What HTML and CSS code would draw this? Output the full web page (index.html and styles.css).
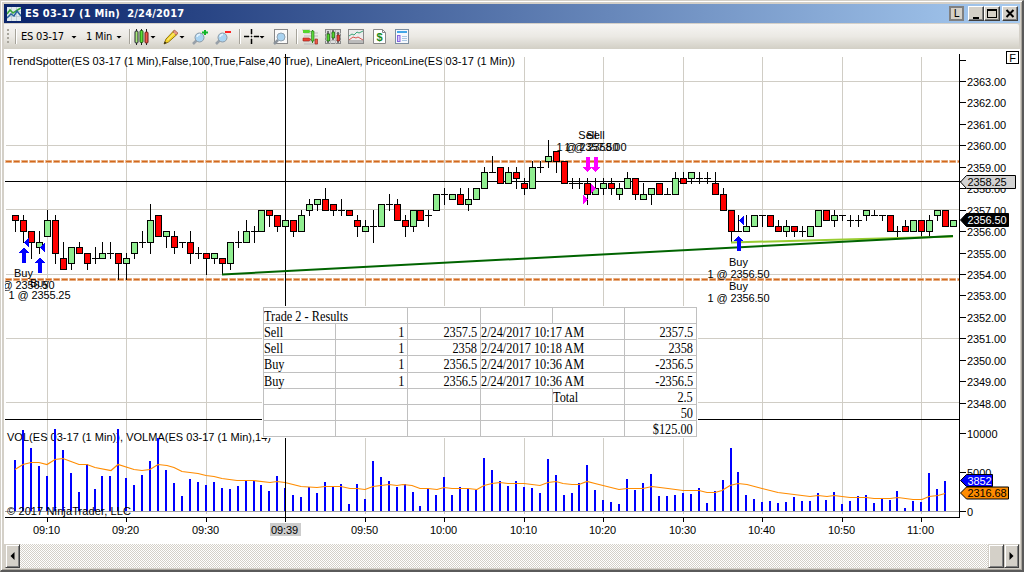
FILE: index.html
```html
<!DOCTYPE html>
<html lang="en">
<head>
<meta charset="utf-8">
<title>ES 03-17 (1 Min) 2/24/2017</title>
<link rel="stylesheet" href="styles.css">
</head>
<body>
<div class="window">
  <header class="titlebar">
    <svg class="app-icon" width="14" height="14" viewBox="0 0 14 14"><rect width="14" height="14" fill="#dfe9ee"/><path d="M0 4.5h14M0 9.5h14M4.5 0v14M9.5 0v14" stroke="#b4c4ce" stroke-width=".7"/><path d="M0 7l3-4 3 3 3-2 5-3" fill="none" stroke="#38a838" stroke-width="1.5"/><path d="M0 11l4-4 3 2 3-5 4 5" fill="none" stroke="#26649c" stroke-width="1.5"/></svg>
    <span class="title">ES 03-17 (1 Min)&nbsp; 2/24/2017</span>
    <span class="link-btn">L</span>
    <span class="win-btn"><svg width="13" height="12"><path d="M3 9h6v2H3z"/></svg></span>
    <span class="win-btn"><svg width="13" height="12"><path d="M1 1h10v9H1zM2 3v6h8V3z" fill-rule="evenodd"/></svg></span>
    <span class="win-btn close"><svg width="13" height="12"><path d="M2.500 2l7 7m0-7l-7 7" stroke="#000" stroke-width="2"/></svg></span>
  </header>

  <nav class="toolbar">
    <span class="grip"></span><span class="sep"></span>
    <span class="label instrument">ES 03-17</span><span class="caret"></span>
    <span class="label period">1 Min</span><span class="caret"></span>
    <span class="sep after-period"></span>
    <svg class="icon candles" width="16" height="16" viewBox="0 0 16 16"><path d="M2.5 0v16M7.5 0v16M12.5 0v16" stroke="#222"/><rect x="1" y="2" width="3" height="12" rx="1" fill="#a8e878" stroke="#223"/><rect x="6" y="1.5" width="3" height="12" rx="1" fill="#5be033" stroke="#1a5a10"/><rect x="11" y="3" width="3" height="11" rx="1" fill="#f25a4c" stroke="#6a1b14"/></svg>
    <span class="caret"></span>
    <svg class="icon pencil" width="16" height="16" viewBox="0 0 16 16"><path d="M1 15l2-5 8-8.5 3.5 3.5-9 8z" fill="#f5d52c" stroke="#94750c"/><path d="M10 3l1.5-2 3.5 3-2 2z" fill="#e99580" stroke="#a45e50" stroke-width=".7"/><path d="M1 15l.7-2.5 2 1.6z" fill="#222"/><path d="M4.5 11l7-7" stroke="#fff5a0"/></svg>
    <span class="caret"></span>
    <svg class="icon zoom-in" width="16" height="16" viewBox="0 0 16 16"><path d="M1 15l4-4" stroke="#98a0a8" stroke-width="2.5"/><circle cx="7.5" cy="8.5" r="4.5" fill="#a9d3f1" stroke="#8b99a5"/><path d="M5 8a3 3 0 013-2.5" stroke="#e6f5ff" fill="none" stroke-width="1.3"/><path d="M10 3.5h6M13 1v5" stroke="#12b52a" stroke-width="2"/></svg>
    <svg class="icon zoom-out" width="16" height="16" viewBox="0 0 16 16"><path d="M1 15l4-4" stroke="#98a0a8" stroke-width="2.5"/><circle cx="7.5" cy="8.5" r="4.5" fill="#a9d3f1" stroke="#8b99a5"/><path d="M5 8a3 3 0 013-2.5" stroke="#e6f5ff" fill="none" stroke-width="1.3"/><path d="M10 3h6" stroke="#f22" stroke-width="2"/></svg>
    <span class="sep after-zoom"></span>
    <svg class="icon cross" width="15" height="15" viewBox="0 0 15 15"><path d="M0 7h5v1H0zM10 7h5v1h-5zM7 0h1v5H7zM7 10h1v5H7zM7 7h1v1H7z" stroke="#000" stroke-width=".5"/></svg>
    <span class="caret"></span>
    <svg class="icon frame" width="16" height="16" viewBox="0 0 16 16"><rect x="1.5" y=".5" width="13" height="14" fill="#fafafa" stroke="#888"/><path d="M1 15l4-4" stroke="#8c949c" stroke-width="2.5"/><circle cx="8" cy="8" r="4" fill="#a9d3f1" stroke="#8fa0ae"/></svg>
    <span class="sep after-frame"></span>
    <svg class="icon trader" width="16" height="16" viewBox="0 0 16 16"><path d="M0 1h8M2 4h14M2 7h14M2 12h14M2 15h14" stroke="#bbb"/><path d="M1 1h6l2 1.500-2 1.500H1z" fill="#55d62d"/><path d="M1 9h6l2 1.500L7 12H1z" fill="#e8402f" stroke="#9b2018" stroke-width=".6"/><path d="M10.500 1v13" stroke="#2a8a16"/><path d="M9.500 2h2.500v10H9.500z" fill="#5bd838" stroke="#29701a" stroke-width=".6"/><path d="M13 10h2.500v5H13z" fill="#ef5a49" stroke="#8f2018" stroke-width=".6"/></svg>
    <svg class="icon data" width="16" height="16" viewBox="0 0 16 16"><rect x=".5" y=".5" width="15" height="14" fill="#ddd" stroke="#888"/><path d="M0 4.500h16M0 8h16M0 11.500h16M5.500 1v14M10.500 1v14" stroke="#bbb"/><path d="M3 2v12M8 1v10M13 3v11" stroke="#111"/><path d="M2 5h2.500v7H2zM7 3h2.500v6H7z" fill="#55d830" stroke="#175b0c" stroke-width=".7"/><path d="M12 6h2.500v6H12z" fill="#ef4438" stroke="#7a1812" stroke-width=".7"/></svg>
    <svg class="icon lines" width="16" height="16" viewBox="0 0 16 16"><rect x=".5" y=".5" width="15" height="14" fill="#ececec" stroke="#888"/><path d="M1 11h14v3H1z" fill="#bbb"/><path d="M1 7l3-2 2 1 3-3 2 1 4-2" fill="none" stroke="#3aa578"/><path d="M1 11l4-3 3 1 2-1 5 3" fill="none" stroke="#d9534f"/></svg>
    <svg class="icon money" width="13" height="15" viewBox="0 0 13 15"><path d="M.5.500h9l3 3v11H.5z" fill="#fff" stroke="#888"/><path d="M9.500.5v3h3" fill="none" stroke="#888"/><text x="6.500" y="11.500" text-anchor="middle">$</text></svg>
    <svg class="icon props" width="14" height="16" viewBox="0 0 14 16"><rect x=".5" y=".5" width="13" height="14" fill="#f6f9fd" stroke="#7c8ea0"/><path d="M2 2h10v2H2z" fill="#43a7e8"/><rect x="2.500" y="6.500" width="2.500" height="6" fill="#dac8fb" stroke="#8565e0"/><path d="M7 7.500h5M7 9.500h5M7 11.500h5" stroke="#aac8e4"/></svg>
  </nav>

  <main class="chart-panel">
    <svg id="chart" class="chart" width="1016" height="495" viewBox="4 49 1016 495"></svg>
    <div class="results">
      <div class="wide2"><b>Trade 2 - Results</b></div><div></div><div></div><div></div><div></div>
      <div><b>Sell</b></div><div class="num"><b>1</b></div><div class="num"><b>2357.5</b></div><div class="wide2"><b>2/24/2017 10:17 AM</b></div><div class="num"><b>2357.5</b></div>
      <div><b>Sell</b></div><div class="num"><b>1</b></div><div class="num"><b>2358</b></div><div class="wide2"><b>2/24/2017 10:18 AM</b></div><div class="num"><b>2358</b></div>
      <div><b>Buy</b></div><div class="num"><b>1</b></div><div class="num"><b>2356.5</b></div><div class="wide2"><b>2/24/2017 10:36 AM</b></div><div class="num"><b>-2356.5</b></div>
      <div><b>Buy</b></div><div class="num"><b>1</b></div><div class="num"><b>2356.5</b></div><div class="wide2"><b>2/24/2017 10:36 AM</b></div><div class="num"><b>-2356.5</b></div>
      <div></div><div></div><div></div><div></div><div><b>Total</b></div><div class="num"><b>2.5</b></div>
      <div></div><div></div><div></div><div></div><div></div><div class="num"><b>50</b></div>
      <div></div><div></div><div></div><div></div><div></div><div class="num"><b>$125.00</b></div>
    </div>
  </main>

  <footer class="scrollbar">
    <span class="sb-btn"><svg width="5" height="8"><path d="M4.500 0v8L.5 4z"/></svg></span>
    <span class="track"></span>
    <span class="sb-btn thumb"></span>
    <span class="sb-btn"><svg width="5" height="8"><path d="M.5 0v8l4-4z"/></svg></span>
  </footer>
</div>
<script src="chart.js"></script>
</body>
</html>
```
FILE: styles.css
```css
* { box-sizing: border-box; }
body { margin: 0; background: #d4d0c8; overflow: hidden; }

.window {
  width: 1024px; height: 572px;
  display: flex; flex-direction: column;
  padding: 2px 2px 2px 3px;
  background: #d4d0c8;
  border-style: solid;
  border-width: 1px 2px 2px 1px;
  border-color: #d4d0c8 #5a5a5a #5a5a5a #d4d0c8;
  box-shadow: inset 1px 1px #fff, inset -1px -1px #a8a49c;
}

.titlebar {
  height: 19px; flex: none; margin-top: 1px;
  display: flex; align-items: center;
  padding: 0 2px 0 3px;
  width: 1016px;
  background: linear-gradient(90deg, #0a246a, #a6caf0);
  color: #fff;
}
.app-icon { margin-right: 4px; }
.title {
  font: bold 11px/18px "DejaVu Sans Condensed", "DejaVu Sans", sans-serif;
  font-stretch: condensed;
  white-space: nowrap; letter-spacing: .18px;
  margin-right: auto;
}
.link-btn {
  width: 15px; height: 15px; margin-right: 4px;
  border: 2px solid #808080; background: #d4d0c8; color: #000;
  font: 10px/11px "DejaVu Sans", sans-serif; text-align: center;
}
.win-btn {
  width: 16px; height: 15px;
  display: flex; align-items: center; justify-content: center;
  background: #d4d0c8;
  border: 1px solid; border-color: #fff #404040 #404040 #fff;
  box-shadow: inset -1px -1px #808080;
}
.win-btn svg { flex: none; }
.win-btn.close { margin-left: 2px; }

.toolbar {
  height: 25px; flex: none; width: 1015px; margin-top: 1px;
  display: flex; align-items: center;
  padding-left: 3px;
  background: linear-gradient(#f6f5f3, #ebe9e4 50%, #d2cfc5);
  border-radius: 0 2px 2px 0;
  font: 11px "DejaVu Sans Condensed", "DejaVu Sans", sans-serif;
  font-stretch: condensed;
}
.toolbar > * { flex: none; }
.grip { width: 2px; height: 16px; background: repeating-linear-gradient(#a8a59c 0 2px, transparent 2px 4px); }
.sep { width: 1px; height: 15px; margin-left: 6px; background: #a6a39a; box-shadow: 1px 0 #fff; }
.label { white-space: nowrap; letter-spacing: -.2px; }
.instrument { margin-left: 5px; width: 50px; }
.period { margin-left: 9px; width: 30px; }
.caret { width: 6px; height: 3px; background: #000; clip-path: polygon(0 0, 100% 0, 50% 100%); margin-top: 1px; }
.sep.after-period { margin-left: 7px; }
.candles { margin-left: 4px; }
.pencil { margin-left: 7px; }
.zoom-in { margin-left: 7px; }
.zoom-out { margin-left: 7px; }
.sep.after-zoom { margin-left: 8px; }
.cross { margin-left: 4px; }
.frame { margin-left: 8px; }
.sep.after-frame { margin-left: 7px; }
.trader { margin-left: 5px; }
.data, .lines { margin-left: 7px; }
.money { margin-left: 9px; }
.money text { font: bold 11px "Liberation Sans", sans-serif; fill: #1b8a1b; }
.props { margin-left: 9px; }

.chart-panel { position: relative; width: 1016px; height: 495px; flex: none; background: #fff; }
.chart { display: block; shape-rendering: crispEdges; }
.chart text { font: 11px "Liberation Sans", Arial, sans-serif; fill: #000; }
.chart .light { fill: #fff; }
.chart .smooth { shape-rendering: auto; }
.mid { text-anchor: middle; }

.results {
  position: absolute; left: 259px; top: 258px;
  display: grid;
  grid-template-columns: 72px 72px 73px 72px 72px 72px;
  grid-template-rows: 16px 16px 16px 17px 16px 16px 16px 16px;
  background: #fff;
  border: solid #c0c0c0; border-width: 1px 0 0 1px;
  outline: 1px solid #fff;
  font: 15px/16px "Liberation Serif", "Times New Roman", serif;
  color: #000;
}
.results div { border: solid #c0c0c0; border-width: 0 1px 1px 0; white-space: nowrap; }
.results b { display: inline-block; font-weight: normal; transform: scaleX(.82); transform-origin: 0 0; }
.results .num { text-align: right; padding: 0 3px 0 0; }
.results .num b { transform-origin: 100% 0; }
.results .wide2 { grid-column: span 2; }

.scrollbar { height: 24px; flex: none; width: 1015px; display: flex; padding-left: 1px; }
.track { flex: 1; background: repeating-conic-gradient(#fff 0 25%, #d4d0c8 0 50%) 0 0 / 2px 2px; }
.sb-btn {
  width: 15px; height: 24px;
  display: flex; align-items: center; justify-content: center;
  background: #d4d0c8;
  border: 1px solid; border-color: #d4d0c8 #404040 #404040 #d4d0c8;
  box-shadow: inset 1px 1px #fff, inset -1px -1px #808080;
}
.sb-btn.thumb { width: 16px; }
```
FILE: chart.js
```js
// Candles: colour (g up, r down, d doji), body top, body bottom, high, low,
// in quarter-point ticks above 2354.
const candles = `r 11 10 11 8|r 10 8 11 6|r 8 6 8 3|g 6 5 8 4|g 10 7 12 7|r 10 4 11 2|r 3 1 6 1|g 5 2 5 1|r 5 4 6 4|r 4 2 4 1
d 3 3 5 2|g 4 3 6 3|d 4 4 6 3|r 4 2 4 -1|g 3 2 4 -1|g 6 4 6 3|d 6 6 8 5|g 10 6 13 4|r 11 7 11 7|g 8 7 8 5
r 7 5 8 4|d 6 6 6 5|r 6 4 8 2|d 4 4 5 3|r 4 3 4 0|g 4 3 4 2|r 3 2 3 0|g 6 2 6 1|d 6 6 8 5|g 8 6 10 6
d 8 8 9 6|g 12 8 12 8|r 12 11 12 9|r 11 9 11 8|g 10 9 10 9|r 10 8 10 7|g 11 8 12 8|g 13 12 14 11|g 14 13 14 12|r 14 12 16 12
r 13 12 13 11|d 12 12 14 11|r 12 11 12 11|r 10 9 11 7|g 9 8 10 8|d 9 9 12 6|g 13 9 13 9|d 13 13 15 12|r 13 10 14 10|r 10 9 11 7
g 12 9 12 8|r 12 10 12 10|d 11 11 12 9|g 15 12 15 12|d 15 15 16 13|g 15 14 15 14|r 15 13 16 13|g 14 13 16 12|g 16 14 16 14|g 19 16 20 16
d 19 19 22 19|r 20 17 20 17|g 19 17 20 17|r 19 18 20 16|r 17 16 18 15|g 20 16 21 16|d 20 20 21 19|g 22 21 25 20|r 23 21 23 19|r 21 17 21 17
d 17 17 18 16|d 17 17 18 16|r 17 15 18 13|g 16 15 18 15|g 17 16 18 15|r 17 16 18 15|g 16 15 17 14|g 18 16 19 16|r 18 15 18 14|g 15 14 17 14
g 16 15 16 13|r 17 15 17 15|d 15 15 16 15|g 18 15 19 15|r 18 17 19 17|g 19 18 19 17|d 18 18 19 17|d 18 18 19 17|r 17 15 19 15|r 15 12 16 12
r 12 8 12 6|d 8 8 11 8|g 9 8 11 8|g 11 9 11 9|d 11 11 11 9|r 11 9 11 9|r 9 8 10 8|g 9 8 10 7|r 9 8 9 7|d 8 8 9 7
g 9 7 9 7|g 12 9 12 9|r 12 10 12 10|g 11 10 12 9|d 11 11 11 10|d 10 10 11 9|d 10 10 11 9|g 12 11 12 10|d 11 11 12 11|d 11 11 11 10
r 11 8 11 8|d 8 8 9 7|r 9 8 10 8|g 10 8 10 8|r 10 8 10 7|g 10 8 11 7|g 12 11 12 10|r 12 9 12 9|g 10 9 10 9`
  .split(/[|\n]/).map(s => s.split(' '));

// Volume bar heights in pixels.
const volumes = [51,81,63,45,35,82,61,38,19,47,22,35,35,82,33,26,36,50,73,41,28,15,32,29,26,29,23,22,25,30,30,26,20,35,23,16,14,24,18,29,
  24,27,7,27,12,50,34,30,24,27,19,5,22,16,34,16,24,22,21,53,41,30,25,30,24,23,18,52,36,16,18,28,46,21,11,9,7,32,21,28,37,15,
  15,16,18,17,23,8,20,31,63,39,16,12,9,10,8,9,14,10,10,18,11,19,7,10,15,16,8,12,11,20,3,10,9,38,22,30];

const average = '15,469 23,464 31,462 39,462 47,464 55,459 63,458 71,461 79,464 87,464 95,467 111,470 118,464 134,469 142,470 150,469 158,464 167,465 174,467 182,471 198,473 206,475 214,476 222,478 237,480 253,480 270,482 277,481 285,482 301,486 317,487 325,486 341,486 350,488 357,488 365,489 373,486 389,484 397,485 403,484 412,485 420,488 428,488 437,489 444,487 452,488 468,488 477,489 484,485 492,483 500,482 508,483 524,483 540,485 548,482 556,481 563,483 572,484 579,484 587,481 595,483 619,489 627,488 643,488 652,486 668,488 683,490 699,490 707,492 715,492 722,490 730,485 738,483 747,484 762,488 778,492 810,496 818,495 827,496 834,495 850,497 866,497 874,498 890,498 898,497 913,499 922,499 929,496 938,495 945,493';

const X = i => Math.round(15 + 7.95 * i);
const Y = n => Math.round(274 - 5.36 * n);
let out = '';
const rect = (x, y, w, h, f) => { out += `<rect x="${x}" y="${y}" width="${w}" height="${h}" fill="${f}"/>`; };
const text = (x, y, s, len, cls = '') => {
  out += `<text x="${x}" y="${y}" class="${cls}"${len ? ` textLength="${len}"` : ''}>${s}</text>`;
};
const path = (d, f, extra = '') => { out += `<path d="${d}" fill="${f}" ${extra}/>`; };

// Grid
const grid = '#d0cdc5';
for (const y of [81, 145, 209, 274, 338, 402]) rect(6, y, 953, 1, grid);
for (let i = 4; i < 118; i += 10) rect(X(i), 57, 1, 457, grid);
rect(5, 511, 954, 1, '#a0a0a0');

// Indicator captions
text(7, 65, 'TrendSpotter(ES 03-17 (1 Min),False,100,True,False,40 True), LineAlert, PriceonLine(ES 03-17 (1 Min))', 508);
text(7, 441, 'VOL(ES 03-17 (1 Min)), VOLMA(ES 03-17 (1 Min),14)', 264);

// Volume
volumes.forEach((h, i) => rect(X(i) - 1, 511 - h, 2, h, '#0000ff'));
out += `<polyline class="smooth" points="${average}" transform="translate(0 .5)" fill="none" stroke="#ff8c00" stroke-width="1.2"/>`;
text(7, 515, '© 2017 NinjaTrader, LLC', 124);

// Alert lines
for (const y of [161, 279]) {
  path(`M5 ${y + .5}H959`, 'none', 'stroke="#edc09c" stroke-width="3" stroke-dasharray="7 1"');
  path(`M6 ${y + .5}H959`, 'none', 'class="smooth" stroke="#d2691e" stroke-width="1.6" stroke-dasharray="5.500 2.500"');
}

// Crosshair and panel borders
rect(5, 181, 960, 1, '#000');
rect(285, 54, 1, 464, '#000');
rect(5, 419, 954, 1, '#000');

// Candles
candles.forEach(([c, t, b, h, l], i) => {
  const x = X(i), top = Y(t), bot = Y(b);
  rect(x, Y(h), 1, Y(l) - Y(h) + 1, '#000');
  rect(x - 3, top, 7, bot - top + 1, '#000');
  if (c !== 'd') rect(x - 2, top + 1, 5, bot - top - 1, c === 'g' ? '#90ee90' : '#ff0000');
});

// Trend lines
path('M731 242.500L953 236.500', 'none', 'class="smooth" stroke="#9acd32" stroke-width="2"');
path('M222 274.500L953 236', 'none', 'class="smooth" stroke="#006400" stroke-width="2"');

// Executions
const up = (x, y) => path(`M${x} ${y}l5 5h-3v10h-4v-10h-3z`, '#0000ff');
const down = (x, y) => path(`M${x} ${y}l5-5h-3v-10h-4v10h-3z`, '#ff00ff');
const left = (x, y) => path(`M${x} ${y}l5-5v10z`, '#0000ff');
const right = (x, y) => path(`M${x} ${y}l-5-5v10z`, '#ff00ff');
up(23.5, 247.5); up(39.5, 257.5); up(738.5, 236);
left(23.5, 242.5); left(39.5, 247.5); left(738.5, 220.5);
down(587.5, 172); down(595.5, 172);
right(595.5, 188.5); right(587.5, 199.5);
for (const [x, y, a, dy, b] of [
  [23.5, 277, 'Buy', 12, '1 @ 2356.50'], [39.5, 287, 'Buy', 12, '1 @ 2355.25'],
  [587.5, 139, 'Sell', 12, '1 @ 2357.50'], [595.5, 139, 'Sell', 12, '1 @ 2358.00'],
  [738.5, 266, 'Buy', 12, '1 @ 2356.50'], [738.5, 290, 'Buy', 12, '1 @ 2356.50'],
]) { text(x, y, a, 0, 'mid'); text(x, y + dy, b, 62, 'mid'); }
rect(4, 270, 1, 30, '#fff');

// Axes
rect(959, 54, 1, 464, '#000');
rect(5, 517, 955, 1, '#000');
for (let p = 2364; p >= 2348; p--) {
  const y = Y((p - 2354) * 4);
  rect(960, y, 6, 1, '#000');
  if (p < 2364) text(967, y + 5, p + '.00', 39);
}
for (const [y, s] of [[433, '10000'], [472, '5000'], [511, '0']]) {
  rect(960, y, 6, 1, '#000');
  text(967, y + 5, s);
}
['09:10', '09:20', '09:30', '09:39', '09:50', '10:00', '10:10', '10:20', '10:30', '10:40', '10:50', '11:00'].forEach((s, k) => {
  const x = X(4 + 10 * k);
  rect(x, 518, 1, 4, '#000');
  if (s === '09:39') rect(270, 523, 31, 13, '#ccc');
  text(x - .5, 534, s, 27, 'mid');
});

// Price and volume markers
const tag = (y, x2, h, fill, s, cls, len) => {
  const a = y - h / 2, b = y + h / 2;
  path(`M960.5 ${y}L966.5 ${a}H${x2}V${b}H966.500z`, fill, `class="smooth" stroke="#000"`);
  text(967.5, y + 4, s, len, cls);
};
tag(182, 1015.5, 13, '#d3d3d3', '2358.25', '', 39);
tag(220, 1008.5, 13, '#000', '2356.50', 'light', 39);
tag(480.5, 992.5, 12, '#0000ff', '3852', 'light', 24);
tag(493, 1008.5, 12, '#ff8c00', '2316.68', '', 39);

// Fixed-scale button
out += '<rect x="1006.500" y="51.500" width="12" height="12" fill="#fff" stroke="#000"/>';
text(1012.5, 62, 'F', 0, 'mid');

document.getElementById('chart').innerHTML = out;
```
